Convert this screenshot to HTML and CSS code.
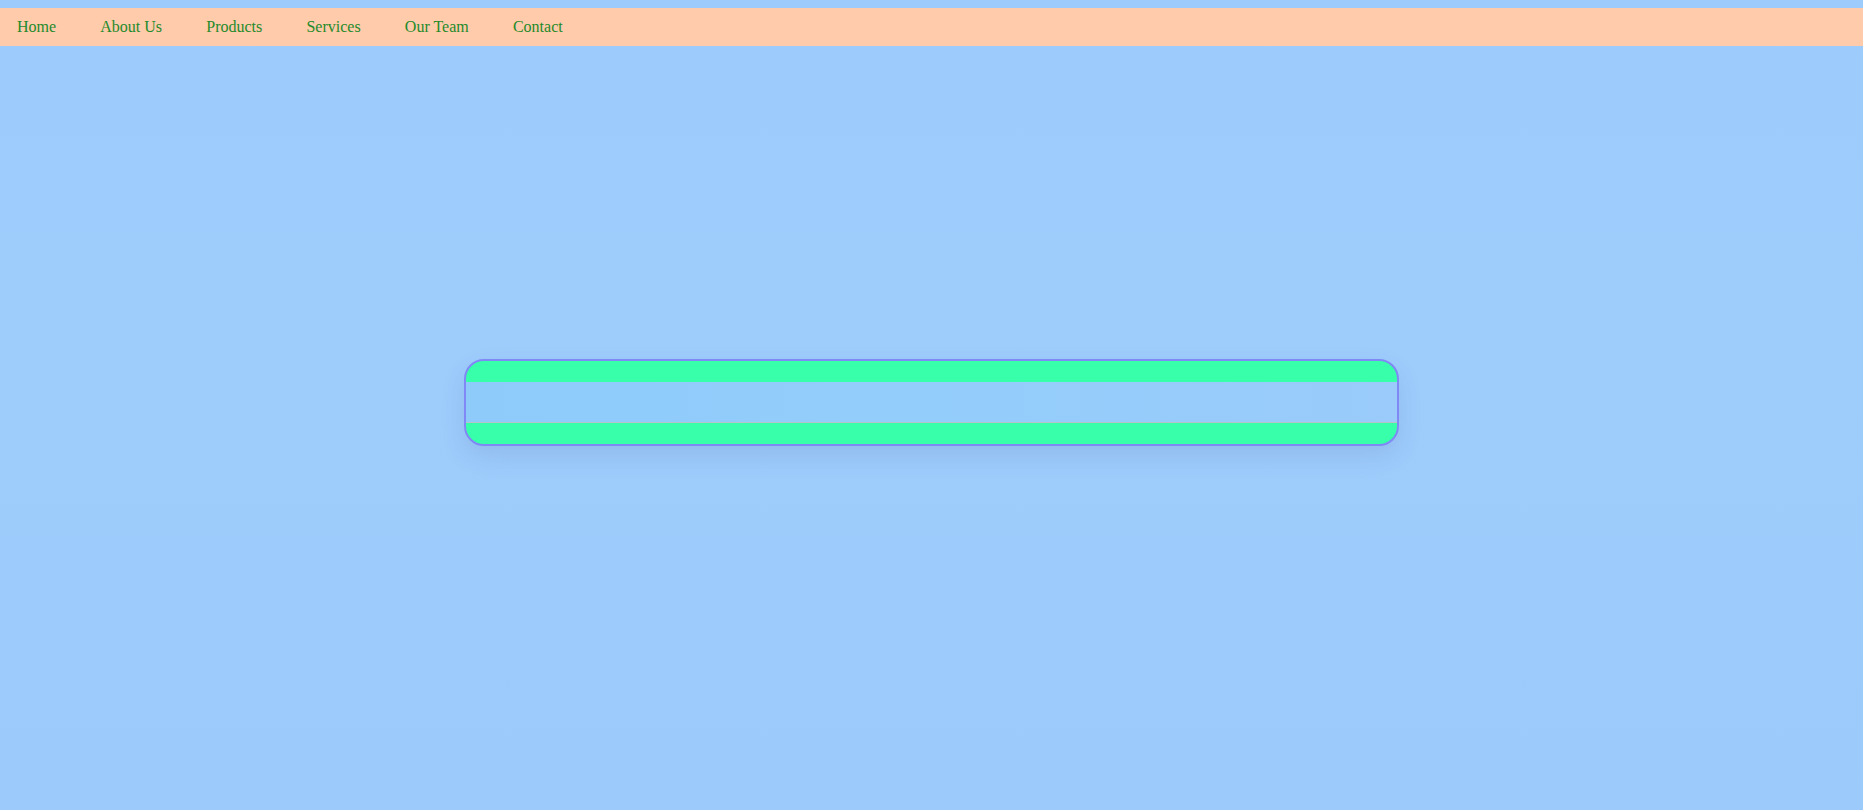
FILE: index.html
```html
<!DOCTYPE html>
<html lang="en">
<head>
<meta charset="utf-8">
<title>Search</title>
<link rel="stylesheet" href="styles.css">
</head>
<body>
<nav class="topnav">
  <a class="nav-link" href="#">Home</a>
  <a class="nav-link" href="#">About Us</a>
  <a class="nav-link" href="#">Products</a>
  <a class="nav-link" href="#">Services</a>
  <a class="nav-link" href="#">Our Team</a>
  <a class="nav-link" href="#">Contact</a>
</nav>
<main class="stage">
  <div class="search-box">
    <input class="search-input" type="text" aria-label="Search">
  </div>
</main>
</body>
</html>
```
FILE: styles.css
```css
html, body {
  height: 100%;
}
body {
  margin: 0;
  padding-top: 8px;
  box-sizing: border-box;
  background: linear-gradient(180deg, #9dcbfb 0%, #9ecdfc 45%, #9ccbfb 100%);
  font-family: "Liberation Serif", "Times New Roman", serif;
  overflow: hidden;
}
.topnav {
  display: flex;
  align-items: center;
  height: 38px;
  padding-left: 17px;
  gap: 44.2px;
  background: #ffcbaa;
}
.nav-link {
  color: #1e8a2a;
  font-size: 16px;
  text-decoration: none;
}
.stage {
  display: flex;
  justify-content: center;
  padding-top: 313px;
}
.search-box {
  width: 50%;
  padding: 21px 0;
  background: #38ffaa;
  border: 2px solid #8088f6;
  border-radius: 20px;
  box-shadow: 0 10px 24px rgba(40, 60, 120, 0.12);
  overflow: hidden;
}
.search-input {
  display: block;
  width: 100%;
  height: 41px;
  box-sizing: border-box;
  margin: 0;
  padding: 0 12px;
  border: none;
  border-bottom: 1px solid #b4c4c8;
  background: linear-gradient(90deg, #8ecbfb 0%, #93cdfb 50%, #9acbfa 100%);
  outline: none;
  font-family: inherit;
  font-size: 16px;
}
```
